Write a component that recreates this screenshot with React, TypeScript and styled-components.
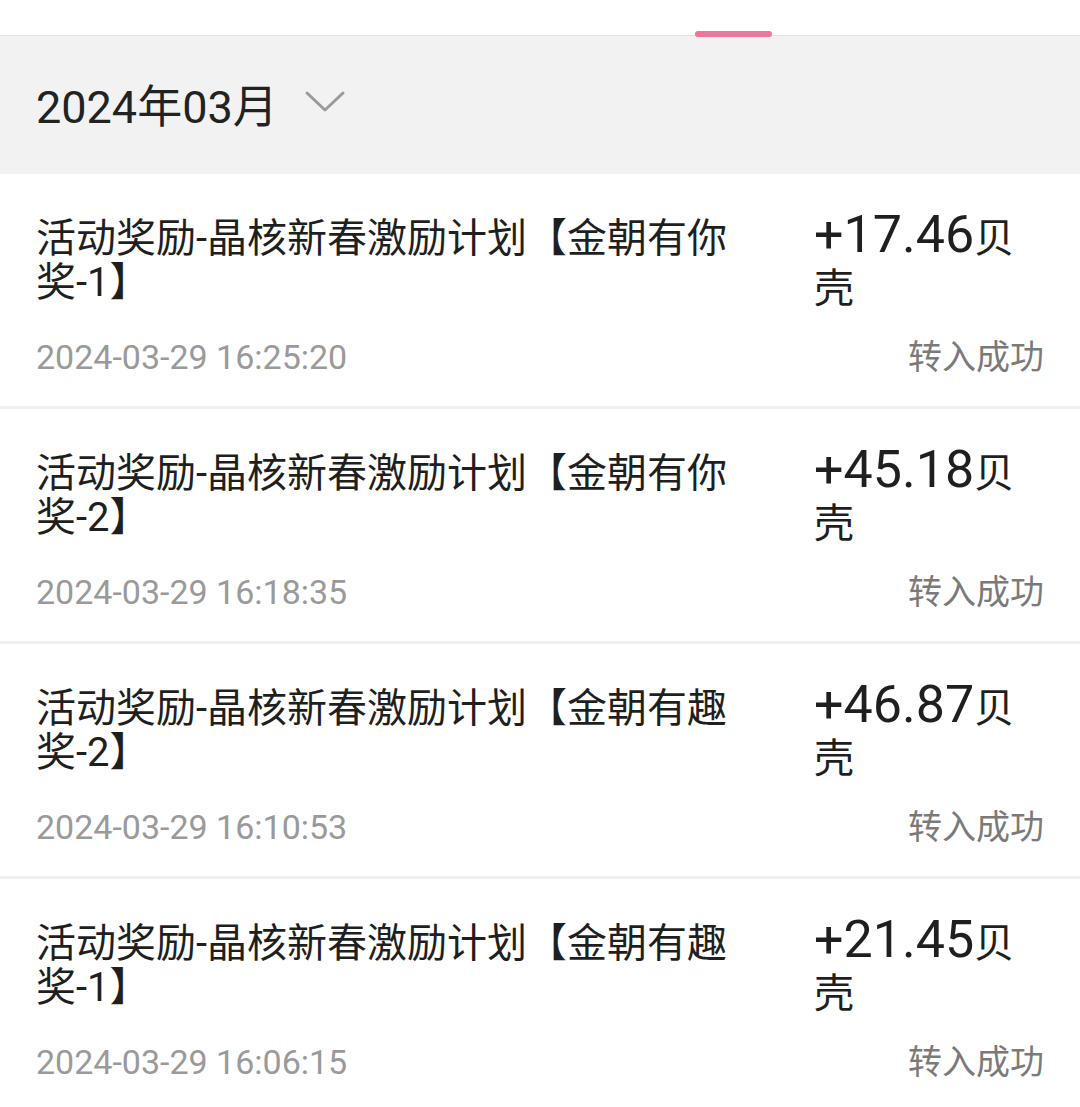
import styled, { createGlobalStyle } from "styled-components";

const GlobalStyle = createGlobalStyle`
  html, body {
    margin: 0;
    padding: 0;
    background: #fff;
  }
  body {
    font-family: Roboto, "Noto Sans CJK SC", sans-serif;
    color: #1f1f1f;
  }
`;

const records = [
  {
    title: "活动奖励-晶核新春激励计划【金朝有你奖-1】",
    amount: "+17.46",
    time: "2024-03-29 16:25:20",
  },
  {
    title: "活动奖励-晶核新春激励计划【金朝有你奖-2】",
    amount: "+45.18",
    time: "2024-03-29 16:18:35",
  },
  {
    title: "活动奖励-晶核新春激励计划【金朝有趣奖-2】",
    amount: "+46.87",
    time: "2024-03-29 16:10:53",
  },
  {
    title: "活动奖励-晶核新春激励计划【金朝有趣奖-1】",
    amount: "+21.45",
    time: "2024-03-29 16:06:15",
  },
];

const App = () => {
  return (
    <Page>
      <GlobalStyle />
      <TabBar>
        <Indicator />
      </TabBar>
      <MonthBar>
        <Month>2024年03月</Month>
        <Chevron width="42" height="24" viewBox="0 0 42 24">
          <path
            d="M3 3 L21 20 L39 3"
            fill="none"
            stroke="#9a9a9a"
            strokeWidth="3"
            strokeLinecap="round"
            strokeLinejoin="round"
          />
        </Chevron>
      </MonthBar>
      <List>
        {records.map((r) => (
          <Item key={r.time}>
            <TopRow>
              <Title>{r.title}</Title>
              <Amount>
                {r.amount}
                <Unit>贝壳</Unit>
              </Amount>
            </TopRow>
            <BottomRow>
              <Time>{r.time}</Time>
              <Status>转入成功</Status>
            </BottomRow>
          </Item>
        ))}
      </List>
    </Page>
  );
};

const Page = styled.div`
  width: 1080px;
  min-height: 1107px;
  background: #fff;
  overflow: hidden;
`;

const TabBar = styled.div`
  height: 35px;
  border-bottom: 1px solid #e4e4e4;
  position: relative;
`;

const Indicator = styled.div`
  position: absolute;
  left: 695px;
  bottom: -2px;
  width: 77px;
  height: 6px;
  border-radius: 3px;
  background: #f07598;
`;

const MonthBar = styled.div`
  height: 138px;
  background: #f2f2f2;
  display: flex;
  align-items: center;
  padding: 0 36px;
  gap: 26px;
`;

const Month = styled.div`
  font-size: 45px;
  color: #222;
  margin-top: -4px;
`;

const Chevron = styled.svg`
  display: block;
  margin-top: -6px;
`;

const List = styled.div`
  display: flex;
  flex-direction: column;
`;

const Item = styled.div`
  padding: 36px 36px 29px;
  border-bottom: 3px solid #f0f0f0;
`;

const TopRow = styled.div`
  display: flex;
  align-items: baseline;
  gap: 58px;
`;

const Title = styled.div`
  width: 720px;
  font-size: 40px;
  line-height: 44px;
  color: #1f1f1f;
`;

const Amount = styled.div`
  flex: 1;
  font-size: 52px;
  line-height: 50px;
  color: #1f1f1f;
`;

const Unit = styled.span`
  font-size: 40px;
  line-height: 40px;
`;

const BottomRow = styled.div`
  display: flex;
  justify-content: space-between;
  align-items: center;
  margin-top: 27px;
`;

const Time = styled.div`
  font-size: 34px;
  line-height: 40px;
  color: #9a9a9a;
`;

const Status = styled.div`
  font-size: 34px;
  line-height: 40px;
  color: #7a7a7a;
`;

export default App;
